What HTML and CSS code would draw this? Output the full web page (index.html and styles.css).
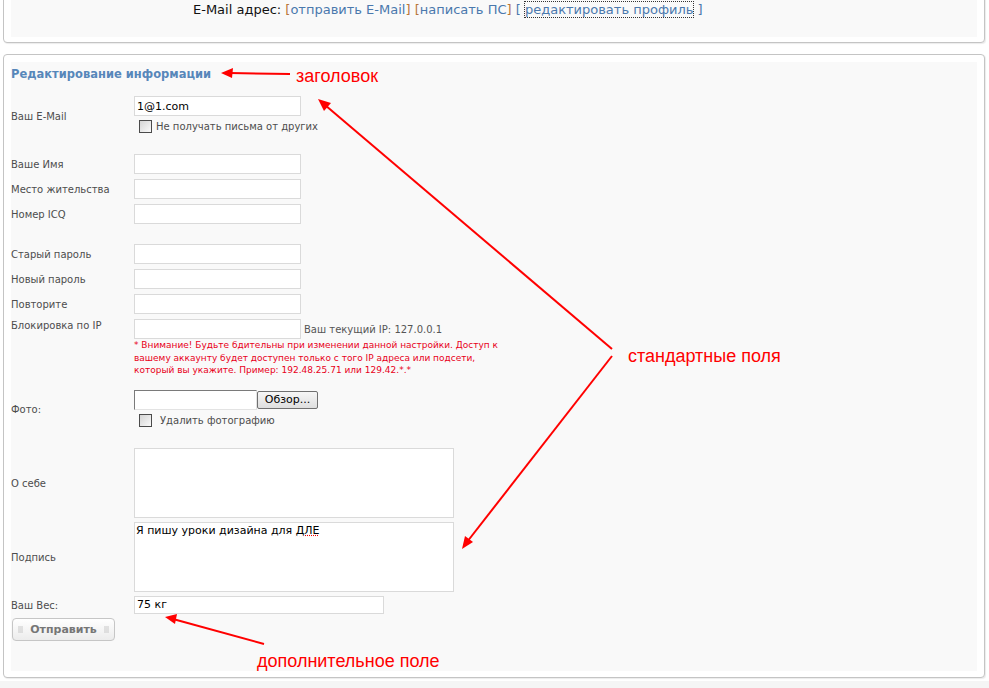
FILE: index.html
```html
<!DOCTYPE html>
<html lang="ru">
<head>
    <meta charset="UTF-8">
    <title>Редактирование информации</title>
    <link rel="stylesheet" href="styles.css">
</head>
<body>
    <div class="page">
        <div class="box box-top">
            <div class="box-in">
                <div class="userlinks">
                    E-Mail адрес: <span class="br">[</span><a href="#">отправить E-Mail</a><span class="br">]</span>
                    <span class="br">[</span><a href="#">написать ПС</a><span class="br">]</span>
                    <span class="br2">[</span> <a href="#" class="focused">редактировать профиль</a> <span class="br2">]</span>
                </div>
            </div>
        </div>

        <div class="box box-main">
            <div class="box-in">
                <h2 class="title">Редактирование информации</h2>
                <form class="edit">
                    <div class="row row-email">
                        <label class="lbl">Ваш E-Mail</label>
                        <div class="field">
                            <input type="text" class="inp" value="1@1.com">
                            <label class="check"><input type="checkbox"> Не получать письма от других</label>
                        </div>
                    </div>

                    <div class="row"><label class="lbl">Ваше Имя</label><input type="text" class="inp"></div>
                    <div class="row"><label class="lbl">Место жительства</label><input type="text" class="inp"></div>
                    <div class="row row-gap"><label class="lbl">Номер ICQ</label><input type="text" class="inp"></div>

                    <div class="row"><label class="lbl">Старый пароль</label><input type="password" class="inp"></div>
                    <div class="row"><label class="lbl">Новый пароль</label><input type="password" class="inp"></div>
                    <div class="row"><label class="lbl">Повторите</label><input type="password" class="inp"></div>

                    <div class="row row-ip">
                        <label class="lbl">Блокировка по IP</label>
                        <div class="field">
                            <div class="ip-line">
                                <input type="text" class="inp">
                                <span class="ip-now">Ваш текущий IP: 127.0.0.1</span>
                            </div>
                            <div class="warn">* Внимание! Будьте бдительны при изменении данной настройки. Доступ к<br>вашему аккаунту будет доступен только с того IP адреса или подсети,<br>который вы укажите. Пример: 192.48.25.71 или 129.42.*.*</div>
                        </div>
                    </div>

                    <div class="row row-photo">
                        <label class="lbl">Фото:</label>
                        <div class="field">
                            <div class="file">
                                <span class="file-path"></span><button type="button" class="file-btn">Обзор...</button>
                            </div>
                            <label class="check check-photo"><input type="checkbox"> Удалить фотографию</label>
                        </div>
                    </div>

                    <div class="row row-area"><label class="lbl">О себе</label><div class="area"></div></div>
                    <div class="row row-area"><label class="lbl">Подпись</label><div class="area">Я пишу уроки дизайна для <span class="typo">ДЛЕ</span></div></div>
                    <div class="row row-extra"><label class="lbl">Ваш Вес:</label><input type="text" class="inp inp-wide" value="75 кг"></div>

                    <button type="button" class="send"><span class="grip"></span>Отправить<span class="grip"></span></button>
                </form>
            </div>
        </div>
        <div class="footer"></div>

        <svg class="notes" width="989" height="688" viewBox="0 0 989 688">
            <g stroke="#f00" stroke-width="2" fill="none">
                <line x1="290" y1="74" x2="230" y2="73"/>
                <line x1="612" y1="349" x2="325" y2="105"/>
                <line x1="612" y1="356" x2="467" y2="542"/>
                <line x1="264" y1="644" x2="173" y2="619"/>
            </g>
            <g fill="#f00">
                <polygon points="221,73 233,68 232,78"/>
                <polygon points="318,99 331,103 324,111"/>
                <polygon points="462,549 465,536 473,542"/>
                <polygon points="165,617 177,614 175,624"/>
            </g>
            <g class="note-text">
                <text x="296" y="82">заголовок</text>
                <text x="628" y="362">стандартные поля</text>
                <text x="257" y="667">дополнительное поле</text>
            </g>
        </svg>
    </div>
</body>
</html>
```

FILE: styles.css
```css
* {
    margin: 0;
    padding: 0;
    box-sizing: border-box;
}
body {
    font-family: "DejaVu Sans", Verdana, sans-serif;
    font-size: 10px;
    color: #4d4d4d;
    background: #fff;
    overflow: hidden;
}
.page {
    position: relative;
    display: flow-root;
    padding: 0 4px 0 3px;
}
.box {
    border: 1px solid #c4c4c4;
    border-radius: 4px;
    box-shadow: 1px 1px 1px rgba(0,0,0,0.08);
    background: #fff;
}
.box-in {
    background: #f9f9f9;
}
.box-top {
    margin-top: -20px;
    padding: 7px 7px 5px;
}
.box-top .box-in {
    padding: 15px 0 20px 182px;
}
.userlinks {
    font-size: 13px;
    line-height: 14px;
    color: #111;
}
.userlinks a {
    color: #4a78ad;
    text-decoration: none;
}
.userlinks .br {
    color: #b8773a;
}
.userlinks .br2 {
    color: #4a78ad;
}
.userlinks .focused {
    outline: 1px dotted #333;
}
.box-main {
    margin-top: 11px;
    padding: 7px 7px 6px;
}
.box-main .box-in {
    padding: 5px 0 30px;
}
.title {
    font-size: 11.5px;
    line-height: 14px;
    font-weight: bold;
    color: #5787ba;
    margin-bottom: 13px;
}
.row {
    display: flex;
    align-items: center;
    padding: 2px 0 3px;
}
.lbl {
    width: 123px;
    flex-shrink: 0;
    line-height: 14px;
    padding-top: 2px;
}
.field {
    display: flex;
    flex-direction: column;
}
.inp {
    width: 167px;
    height: 20px;
    border: 1px solid #dadada;
    background: #fff;
    padding: 0 2px;
    font-family: "DejaVu Sans", Verdana, sans-serif;
    font-size: 11px;
    color: #000;
    outline: none;
}
.inp-wide {
    width: 250px;
    height: 18px;
}
.check {
    display: flex;
    align-items: center;
    height: 17px;
    margin-top: 2px;
    padding-left: 5px;
    gap: 4px;
}
.check-photo {
    gap: 8px;
}
.check input {
    -webkit-appearance: none;
    appearance: none;
    width: 13px;
    height: 13px;
    border: 1px solid #4b4b4b;
    background: linear-gradient(135deg, #d4d4d4, #fafafa);
}
.row-email {
    margin-bottom: 14px;
}
.row-gap {
    margin-bottom: 15px;
}
.row-ip {
    align-items: flex-start;
    padding: 1px 0 0;
    margin-bottom: 11px;
}
.row-ip .lbl {
    padding-top: 1px;
}
.ip-line {
    display: flex;
    align-items: center;
    margin-top: 1px;
    gap: 3px;
}
.ip-now {
    color: #555;
}
.warn {
    color: #e8001a;
    font-size: 9px;
    line-height: 12.5px;
}
.row-photo {
    margin-bottom: 14px;
}
.file {
    display: flex;
    align-items: center;
    height: 20px;
}
.file-path {
    width: 123px;
    height: 20px;
    background: #fff;
    border: 1px solid #e3e3e3;
    border-top-color: #7a7a7a;
    border-left-color: #7a7a7a;
}
.file-btn {
    width: 61px;
    height: 18px;
    border: 1px solid #707070;
    border-radius: 2px;
    background: linear-gradient(#f6f6f6, #dedede);
    font-family: "DejaVu Sans", Verdana, sans-serif;
    font-size: 11px;
    color: #000;
}
.row-area {
    padding: 2px 0;
}
.area {
    width: 320px;
    height: 70px;
    border: 1px solid #dadada;
    background: #fff;
    padding: 1px 1px;
    font-size: 11px;
    line-height: 14px;
    color: #000;
}
.typo {
    text-decoration: underline dotted #e00;
}
.send {
    display: flex;
    align-items: center;
    justify-content: center;
    gap: 7px;
    width: 103px;
    height: 23px;
    margin: 1px 0 0 1px;
    border: 1px solid #c6c6c6;
    border-radius: 4px;
    background: linear-gradient(#fff, #ececec);
    font-family: "DejaVu Sans", Verdana, sans-serif;
    font-size: 11px;
    font-weight: bold;
    color: #767676;
}
.grip {
    width: 5px;
    height: 7px;
    background: radial-gradient(circle, #c4c4c4 0.6px, transparent 0.8px) 0 0 / 2px 2px;
}
.footer {
    margin: 3px -4px 0 -3px;
    height: 30px;
    background: #f5f5f5;
}
.notes {
    position: absolute;
    left: 0;
    top: 0;
    pointer-events: none;
}
.note-text {
    font-family: "Liberation Sans", Arial, sans-serif;
    font-size: 18px;
    fill: #f00;
}
```
